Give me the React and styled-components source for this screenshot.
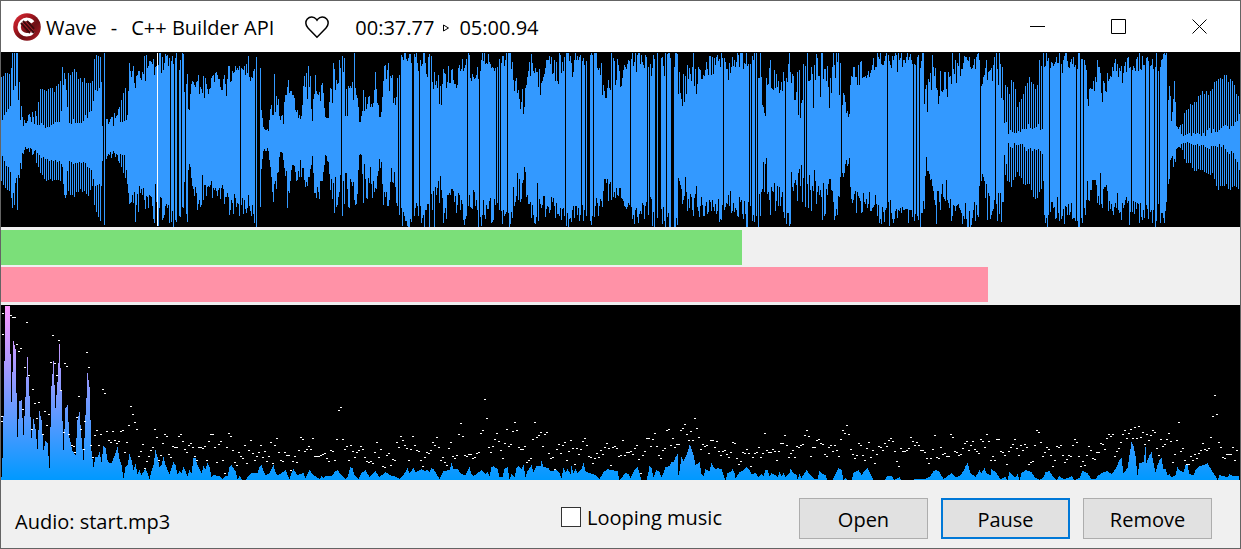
import React from "react";
import styled, { createGlobalStyle, css } from "styled-components";

const GlobalStyle = createGlobalStyle`
  *, *::before, *::after { box-sizing: border-box; }
  body { margin: 0; background: #f0f0f0; }
`;

const Window = styled.main`
  min-height: 100vh;
  display: flex;
  flex-direction: column;
  border: 1px solid #646464;
  background: #f0f0f0;
  color: #000;
  font: 20px/28px "Open Sans", "Noto Sans", sans-serif;
`;

const TitleBar = styled.header`
  display: flex;
  align-items: center;
  height: 51px;
  padding-left: 12px;
  background: #fff;
`;

const Title = styled.h1`
  display: flex;
  gap: 14px;
  margin: 0 31px 0 5px;
  padding-top: 2px;
  font: inherit;
  white-space: nowrap;
`;

const Times = styled.div`
  display: flex;
  align-items: center;
  gap: 8px;
  margin-left: 26px;
  padding-top: 2px;
`;

const Controls = styled.div`
  display: flex;
  align-self: stretch;
  margin-left: auto;
`;

const ControlButton = styled.button`
  display: flex;
  align-items: center;
  justify-content: center;
  width: 81px;
  padding: 0;
  border: 0;
  background: transparent;
`;

const Chart = styled.svg`
  display: block;
  width: 100%;
  height: 175px;
  background: #000;
`;

const Levels = styled.section`
  display: flex;
  flex-direction: column;
  gap: 2px;
  padding: 3px 0;
`;

const Level = styled.div`
  height: 35px;
  background: ${(p) => p.$color};
`;

const Footer = styled.footer`
  display: flex;
  align-items: flex-start;
  padding: 18px 28px 9px 14px;
`;

const FileName = styled.p`
  margin: 10px auto 0 0;
`;

const LoopLabel = styled.label`
  display: flex;
  align-items: center;
  gap: 6px;
  height: 40px;
  margin-right: 77px;
`;

const CheckBox = styled.input`
  appearance: none;
  width: 20px;
  height: 20px;
  margin: 0 0 2px;
  border: 1px solid #333;
  background: #fff;

  &:checked { background: #0078d7; }
`;

const Actions = styled.div`
  display: flex;
  gap: 13px;
`;

const ActionButton = styled.button`
  width: 129px;
  height: 41px;
  padding: 2px 0 0;
  border: 1px solid #adadad;
  background: #e1e1e1;
  color: #000;
  font: inherit;

  ${(p) => p.$primary && css`
    border: 2px solid #0078d7;
  `}
`;

/* Envelope points: x, upper outer, upper inner, lower inner, lower outer. */
const ENVELOPE = `
0 26 74 98 130|6 16 60 112 140|10 18 55 118 140|12 8 40 120 156|17 2 42 125 173|19 35 57 120 130|20 55 75 97 118|24 68 76 95 97|30 64 75 96 100|36 62 76 98 112|40 36 72 104 121|46 36 78 106 130|55 36 74 108 130|60 26 70 108 131|62 22 50 115 134|64 19 22 140 144|66 20 40 130 144|68 20 74 104 142|72 13 74 108 148|80 24 72 108 139|88 28 65 112 145|92 28 60 120 134|94 3 40 132 155|100 1 40 130 173|102 70 76 97 110|106 66 74 98 105|112 67 76 98 104|116 60 72 100 106|120 52 70 102 114|125 34 72 102 128|127 40 68 130 140|129 8 18 148 160|135 22 38 136 163|141 22 30 132 146|144 10 34 135 153|150 6 22 140 152|155 14 32 130 166|160 2 32 132 165|166 8 25 144 155|169 4 14 150 172|172 2 30 155 173|180 1 20 150 173|183 1 3 150 173|184 36 60 112 140|187 10 60 105 157|188 55 72 102 122|191 30 34 120 125|194 15 34 140 148|198 28 50 120 152|205 22 48 125 140|212 26 36 128 142|217 21 28 138 143|222 34 42 132 145|226 20 48 140 170|232 18 28 142 160|236 16 25 140 152|240 8 22 150 164|244 16 24 134 166|248 8 24 140 173|250 26 30 140 155|254 18 22 140 172|256 1 10 150 174|260 16 18 154 156|261 58 60 115 118|263 74 78 96 98|268 78 80 96 98|270 45 66 106 118|273 28 65 110 142|277 35 55 118 130|280 65 70 98 104|283 65 72 100 108|286 28 50 110 150|289 28 46 115 142|292 38 46 112 118|296 58 66 108 125|300 64 68 105 120|304 23 60 115 125|307 34 70 120 145|309 14 60 120 144|312 68 70 102 104|314 24 42 138 142|319 38 44 125 154|322 36 58 128 130|325 64 66 102 104|328 66 67 105 110|330 34 36 125 135|333 10 58 108 153|337 15 35 130 148|343 15 63 110 155|347 25 70 110 162|351 35 50 125 134|354 9 48 130 150|357 36 60 125 145|359 64 72 103 104|361 64 70 100 104|364 10 60 108 161|367 38 55 115 148|371 25 58 115 145|375 26 50 126 156|379 60 70 102 120|381 58 70 110 118|383 20 40 140 150|388 15 32 135 150|392 30 60 105 125|394 50 66 120 130|397 28 35 140 165|399 5 30 150 172|401 3 5 155 170|406 1 14 160 170|409 1 4 164 174|414 6 22 150 165|420 1 18 150 165|425 3 12 155 173|427 2 40 150 165|429 1 3 150 173|432 15 50 120 150|434 5 48 125 165|438 18 56 126 145|441 28 60 112 145|443 12 30 140 165|447 18 40 138 160|451 22 40 135 145|456 20 40 130 155|460 10 28 145 155|463 4 24 150 168|466 5 30 150 170|470 10 35 130 150|474 18 28 138 155|478 18 30 150 170|482 3 12 148 168|487 2 14 145 160|491 12 18 140 165|495 15 24 140 160|499 1 10 150 172|504 4 22 150 165|508 1 10 158 174|512 5 25 140 170|515 28 46 120 155|519 38 56 122 150|522 42 62 110 150|524 45 63 100 120|526 32 35 122 140|528 10 25 145 155|532 5 25 150 165|537 8 40 130 165|540 30 45 150 157|543 20 36 140 155|546 3 15 150 165|550 3 14 145 160|554 12 30 135 160|558 3 35 160 165|562 12 20 150 165|567 1 15 160 172|572 2 26 155 170|577 2 8 150 165|583 8 15 150 165|590 1 4 160 174|593 1 3 160 173|597 10 44 140 160|601 20 55 125 155|604 35 60 115 135|608 15 45 125 150|612 5 45 130 155|616 10 45 130 160|620 30 50 127 140|
622 20 28 145 155|626 10 22 150 165|630 6 18 150 160|635 2 20 155 170|640 2 22 150 165|645 1 15 150 170|650 8 30 145 165|654 5 10 150 172|662 2 30 155 172|670 1 8 155 172|675 3 28 150 170|677 1 2 170 172|678 28 60 120 155|682 28 58 118 145|685 30 56 112 135|687 18 40 138 155|691 12 35 138 150|693 3 35 145 160|697 20 46 130 160|700 20 28 145 160|705 15 25 142 160|709 8 24 140 155|715 10 24 138 155|720 2 20 150 168|725 4 12 155 170|729 8 35 135 160|733 4 22 150 155|738 1 18 145 170|743 1 20 142 172|748 3 15 150 170|753 1 10 155 173|757 1 50 140 172|760 2 20 140 165|763 45 70 100 130|766 35 70 105 138|768 28 45 130 150|771 8 40 132 160|774 22 38 130 155|778 22 40 135 150|782 20 45 132 150|785 12 30 140 165|789 10 45 130 165|793 20 60 110 155|797 28 62 105 140|800 28 70 105 135|803 10 75 108 145|807 5 40 130 150|811 6 60 115 150|814 8 65 112 145|818 18 50 125 145|822 4 40 130 160|826 20 40 135 155|829 22 58 122 140|832 10 35 135 145|834 1 30 140 173|838 2 32 140 172|840 20 55 115 150|844 38 60 115 120|846 60 63 108 115|849 60 66 104 108|850 30 35 134 138|853 18 30 135 158|857 20 40 135 155|861 15 40 132 155|865 24 28 145 155|869 16 26 140 160|873 5 18 140 160|877 3 20 145 165|881 2 20 152 168|886 2 14 150 165|890 2 20 145 170|895 2 12 155 172|899 3 30 155 165|903 8 20 155 160|908 2 18 155 168|912 8 14 150 172|918 1 20 150 174|923 2 50 130 170|926 30 70 105 150|929 32 40 120 125|932 10 40 130 135|935 5 45 130 165|939 25 55 115 155|942 25 42 130 140|946 25 45 118 145|949 25 45 145 165|952 5 28 150 165|955 3 40 148 160|960 4 24 148 165|965 8 20 150 170|970 8 18 152 170|975 10 20 150 165|978 2 14 140 170|981 15 40 115 140|984 28 48 125 145|988 3 40 130 165|992 3 30 138 155|996 1 25 150 172|1000 10 45 128 165|1003 28 50 130 155|1004 50 74 102 116|1006 14 74 110 133|1008 48 82 90 133|1011 24 82 95 135|1014 26 82 90 130|1017 52 82 90 120|1022 45 80 92 132|1026 28 80 94 138|1029 23 76 94 132|1033 30 80 95 148|1036 38 78 94 152|1039 6 78 94 144|1042 12 80 100 140|1044 8 18 150 165|1047 1 20 150 170|1049 2 30 150 165|1053 10 18 150 165|1057 1 12 142 160|1062 5 25 150 170|1067 1 15 152 165|1071 5 22 150 172|1075 10 15 150 172|1078 1 40 150 174|1082 1 10 155 172|1086 10 20 140 155|1087 40 62 110 140|1090 35 45 125 145|1094 30 40 125 135|1097 8 30 130 155|1100 28 55 120 155|1103 22 55 115 145|1107 25 40 138 155|1111 15 25 150 155|1115 5 18 150 165|1119 15 28 130 165|1123 20 32 150 160|1126 12 32 145 165|1129 8 25 150 168|1132 3 20 140 165|1136 10 22 150 165|1141 1 18 150 168|1146 3 15 150 172|1151 12 20 150 165|1155 1 18 155 172|1159 1 30 150 174|1163 1 2 160 174|1166 2 10 150 170|1168 45 50 125 135|1169 32 60 105 133|1171 65 72 95 104|1174 33 50 105 125|1176 72 76 96 97|1179 74 82 94 95|1182 70 84 90 98|1185 56 84 90 112|1190 52 84 90 112|1195 50 84 92 122|1199 40 84 92 120|1205 38 84 92 122|1209 38 80 94 126|1213 32 82 90 125|1218 20 83 90 142|1222 20 82 92 135|1226 20 79 96 135|1228 24 78 96 142|1233 30 76 100 134|1237 40 70 108 138|1240 46 58 120 138
`.trim().split("|").map((point) => point.trim().split(" ").map(Number));

/* Stretches where every second sample is a tall spike: from, to, parity of the tall ones. */
const COMBS = [[0, 12, 1], [36, 62, 0], [67, 101, 0], [119, 127, 1], [1004, 1043, 1], [1180, 1240, 0]];

const SILENT = new Set([
  103, 105, 170, 174, 177, 178, 181, 185, 240, 255, 257, 258, 259, 341, 398, 400, 412, 413, 419, 430,
  467, 479, 496, 498, 500, 507, 565, 581, 585, 587, 588, 589, 593, 612, 630, 647, 649,
  655, 656, 658, 659, 660, 666, 671, 672, 673, 723, 749, 751, 755, 757, 785, 804, 806,
  841, 887, 913, 916, 919, 980, 995, 1049, 1060, 1076, 1080, 1083, 1131, 1145, 1149,
  1154, 1157, 1159, 1167,
]);

const SPECTRUM = `1 172 2 153 3 111 4 56 5 1 9 1 10 49 11 97 12 67 13 36 14 40 15 44 16 88 17 132 18 114 19 96 21 95 22 113 23 130 24 111 25 92 26 72 27 52 28 72 29 91 30 112 31 133 33 114 35 124 37 144 39 106 41 115 43 145 45 136 47 138 48 151 49 163 50 122 51 81 52 69 53 56 54 80 55 103 57 77 58 58 59 39 60 63 61 86 62 116 63 145 64 124 65 103 67 100 69 133 72 146 75 150 77 115 79 107 81 133 83 155 85 110 86 93 87 68 88 75 89 82 90 115 91 146 93 162 95 152 97 152 99 147 101 157 103 141 105 143 107 155 109 158 111 158 115 148 117 142 119 154 121 160 123 173 125 162 127 160 129 149 131 155 133 165 135 159 137 169 139 165 141 170 145 163 147 168 149 174 151 166 153 160 155 145 157 152 159 162 161 160 163 152 165 160 169 169 171 163 173 157 175 160 177 169 179 166 181 168 183 162 185 166 187 171 189 165 191 168 193 153 195 153 197 160 201 168 203 161 205 164 207 158 209 162 211 172 213 170 219 171 222 174 225 171 227 171 229 162 231 160 235 166 237 174 239 171 242 175 245 175 247 172 251 168 257 168 259 162 261 160 263 166 265 170 269 168 271 164 273 160 275 167 277 170 281 168 285 165 289 174 291 168 293 164 297 170 303 168 305 173 309 165 313 170 319 174 321 171 323 173 325 171 331 171 335 166 337 165 341 170 345 174 347 172 350 162 352 163 354 170 358 174 361 168 365 165 369 172 375 166 379 172 385 167 391 171 394 171 399 174 403 170 407 163 409 168 413 163 415 167 421 164 424 166 427 165 429 167 431 163 433 164 439 174 443 166 449 165 451 158 453 164 457 164 461 169 465 170 469 162 471 169 473 171 477 168 481 165 485 169 487 167 489 171 491 162 493 161 497 164 499 172 502 172 504 164 507 162 509 174 511 169 514 172 516 163 518 161 521 164 523 160 525 172 527 166 531 160 533 167 536 161 540 161 541 156 543 162 548 163 550 166 556 165 559 168 561 173 563 163 565 167 567 164 570 169 571 161 573 168 575 164 577 168 581 164 583 158 585 166 589 168 595 170 599 174 603 167 607 164 610 165 617 166 619 175 625 168 628 169 630 173 634 165 637 162 639 168 641 175 646 175 648 167 649 161 651 163 653 172 656 165 659 167 661 172 663 168 665 162 669 161 671 157 673 157 675 152 677 149 678 170 679 166 681 152 683 156 685 152 687 147 689 140 690 141 693 150 695 160 699 157 701 169 703 171 705 164 709 166 711 158 713 162 715 164 717 163 721 164 723 170 725 175 727 168 730 167 732 164 734 168 735 173 739 167 743 165 746 162 749 165 751 169 755 168 758 172 761 169 763 171 765 165 767 165 769 171 771 168 775 170 777 172 779 167 781 171 783 168 785 172 789 168 790 164 793 168 796 170 797 174 799 169 801 173 804 168 806 165 810 170 814 174 817 174 819 166 821 168 825 170 827 175 832 175 835 169 838 163 841 165 843 175 845 173 847 175 851 175 853 168 858 165 861 170 864 166 867 163 869 167 873 175 884 175 887 171 891 171 894 175 899 172 901 175 925 174 930 171 933 166 936 165 939 167 943 174 947 171 951 168 955 172 959 171 963 166 965 161 967 158 970 168 975 172 979 165 981 168 984 163 986 168 990 170 991 164 995 167 1000 174 1005 172 1007 175 1009 167 1013 171 1015 172 1017 169 1019 175 1021 168 1025 165 1031 167 1034 172 1039 175 1043 172 1045 167 1049 166 1053 172 1056 175 1059 171 1063 174 1067 173 1071 171 1074 175 1079 173 1082 166 1087 168 1091 174 1095 174 1097 171 1101 168 1107 166 1111 169 1115 164 1119 155 1121 153 1123 168 1127 163 1129 150 1131 137 1133 141 1135 151 1137 170 1139 158 1143 157 1145 142 1146 158 1149 150 1151 147 1153 158 1155 167 1157 160 1159 155 1161 153 1163 164 1165 164 1167 170 1169 169 1171 172 1175 170 1177 162 1179 165 1183 167 1185 160 1187 160 1189 169 1193 170 1195 165 1199 161 1203 160 1207 158 1211 165 1215 171 1217 175 1219 170 1223 171 1227 172 1229 169 1233 171 1238 171`
  .split(" ").map(Number).reduce((points, n, i, all) => (i % 2 ? [...points, [all[i - 1], n]] : points), []);

const EARLY_PEAKS = [
  [2, 8], [2, 29], [1, 111], [1, 116], [10, 10], [12, 12], [14, 12], [16, 39], [18, 46], [20, 43], [22, 104],
  [24, 62], [26, 17], [28, 70], [31, 124], [32, 84], [34, 98], [36, 113], [38, 97], [42, 129], [44, 106],
  [46, 120], [48, 109], [50, 57], [52, 30], [54, 58], [56, 70], [58, 35], [60, 85], [63, 127], [64, 58],
  [66, 61], [68, 129], [71, 140], [73, 141], [74, 147], [76, 112], [78, 91], [80, 124], [83, 144], [84, 116],
  [86, 47], [88, 62], [90, 140],
];

/* Held peak of each band, two pixels a band, from x = 92 on. */
const PEAKS = `152 130 125 140 129 84 88 126 135 137 126 135 138 136 126 125 147 137 120 101 109 117 124 151 146 139 163 156 151 145 142 124 132 155 150 138 129 131 149 152 141 142 142 131 129 136 144 147 140 138 142 151 155 142 142 143 141 155 136 129 129 142 157 139 136 155 168 142 128 131 145 157 160 147 151 153 140 158 145 135 148 155 151 147 140 152 146 156 151 137 158 140 133 147 155 156 147 150 150 165 156 151 157 145 132 134 146 144 141 144 133 151 151 151 150 149 148 153 156 145 146 155 134 105 102 134 144 141 155 140 146 152 147 145 141 144 152 156 157 156 158 147 137 152 144 161 162 150 148 160 154 155 137 142 131 135 140 143 155 144 131 140 145 146 155 161 152 147 148 145 137 140 132 142 155 152 157 160 143 137 151 153 150 129 118 131 150 151 149 149 153 152 148 147 128 125 94 113 142 147 141 134 128 136 145 153 138 124 141 139 126 117 125 142 144 144 141 157 155 153 134 117 132 130 127 141 129 127 148 153 152 164 144 139 148 140 137 155 146 135 143 159 143 149 144 136 133 140 151 152 158 153 148 152 145 149 142 138 143 160 142 141 143 151 150 135 150 147 147 146 149 143 140 154 168 150 146 133 133 141 134 128 141 150 153 145 143 125 124 140 133 142 139 139 125 123 119 129 135 126 135 113 123 132 144 139 141 140 148 135 135 142 136 146 150 146 145 149 152 147 137 138 153 159 156 147 148 144 148 161 152 148 147 142 152 148 128 145 147 147 144 146 155 146 138 138 130 140 152 148 145 152 141 142 140 139 130 125 131 151 142 142 135 134 138 139 149 151 142 140 146 140 145 151 134 125 128 120 129 144 149 153 150 138 140 150 155 143 137 152 145 158 149 141 142 145 138 141 135 133 136 146 156 161 143 146 146 145 143 132 136 140 137 140 145 145 147 153 158 153 144 130 152 153 142 149 148 151 151 129 132 146 147 150 149 143 138 136 145 140 136 144 146 148 134 136 142 129 136 155 151 155 134 134 146 147 150 159 146 142 139 134 143 150 140 145 139 142 159 157 156 140 125 127 137 151 147 142 144 150 161 155 141 142 140 150 157 154 150 151 140 134 137 151 161 156 160 150 141 145 153 154 147 147 138 139 144 133 129 131 129 151 146 143 137 129 125 133 128 124 133 122 133 121 132 127 139 129 135 130 125 127 143 150 134 141 139 134 128 136 157 149 135 117 146 143 155 159 159 151 155 149 153 148 145 138 144 145 143 132 111 90 109 137 142 152 153 149 149 149 142 155 145`
  .split(" ").map(Number);

const noise = (n) => {
  const v = Math.sin(n * 127.1 + 311.7) * 43758.5453;
  return v - Math.floor(v);
};

function sample(points, x) {
  let i = 0;
  while (i < points.length - 2 && points[i + 1][0] <= x) i += 1;
  const [a, b] = [points[i], points[i + 1]];
  const t = Math.min(1, Math.max(0, (x - a[0]) / (b[0] - a[0])));
  return a.slice(1).map((v, k) => v + (b[k + 1] - v) * t);
}

/* Share of the way from the outer to the inner envelope; a few samples overshoot the outer one. */
function depth(seed) {
  const n = noise(seed);
  return n < 0.22 ? -0.25 : (n - 0.22) * 1.3;
}

function wavePath() {
  let d = "";
  for (let x = 1; x < 1240; x += 1) {
    if (SILENT.has(x)) continue;
    const [outTop, inTop, inLow, outLow] = sample(ENVELOPE, x);
    const comb = COMBS.find(([from, to]) => x >= from && x < to);
    const base = comb && (x % 2 === comb[2] ? 0 : 0.88);
    const up = comb ? base + noise(x) * 0.12 : depth(x);
    const down = comb ? base + noise(x + 5000) * 0.12 : depth(x + 5000);
    const top = Math.max(1, Math.round(outTop + (inTop - outTop) * up));
    const low = Math.min(175, Math.round(outLow + (inLow - outLow) * down));
    d += `M${x - 1} ${top}h1V${low}h-1z`;
  }
  return `${d}M103 1h1V173h-1z`;
}

function spectrumPath() {
  let d = "M0 175";
  for (let x = 1; x < 1239; x += 1) d += `V${Math.round(sample(SPECTRUM, x)[0])}h1`;
  return `${d}V175z`;
}

function peaksPath() {
  const all = [...EARLY_PEAKS, ...PEAKS.map((y, i) => [92 + i * 2, y])];
  return all.map(([x, y]) => `M${x - 1} ${y}h2v1h-2z`).join("");
}

const WAVE = wavePath();
const BANDS = spectrumPath();
const HELD = peaksPath();

function Waveform() {
  return (
    <Chart viewBox="0 0 1239 175" preserveAspectRatio="none" shapeRendering="crispEdges" role="img" aria-label="Waveform">
      <path d={WAVE} fill="#3399ff" />
      <rect x="156" y="1" width="1" height="173" fill="#fff" />
    </Chart>
  );
}

function Spectrum() {
  return (
    <Chart viewBox="0 0 1239 175" preserveAspectRatio="none" shapeRendering="crispEdges" role="img" aria-label="Spectrum">
      <defs>
        <linearGradient id="bands" gradientUnits="userSpaceOnUse" x1="0" y1="0" x2="0" y2="175">
          <stop offset="0" stopColor="#ff99ff" />
          <stop offset="1" stopColor="#0099ff" />
        </linearGradient>
      </defs>
      <path d={BANDS} fill="url(#bands)" />
      <path d={HELD} fill="#fff" />
    </Chart>
  );
}

function Logo() {
  return (
    <svg width="28" height="28" viewBox="0 0 28 28" aria-hidden="true">
      <defs>
        <linearGradient id="disc" x1="0" y1="0" x2="1" y2="1">
          <stop offset="0" stopColor="#e0303c" />
          <stop offset="0.35" stopColor="#a8161f" />
          <stop offset="0.6" stopColor="#6c1015" />
          <stop offset="1" stopColor="#b31b26" />
        </linearGradient>
      </defs>
      <circle cx="14" cy="14" r="13.8" fill="url(#disc)" />
      <path d="M21.3 8.2A9.4 9.4 0 1 0 21.6 19.4L18.6 17.4A5.9 5.9 0 1 1 18.4 10.4Z" fill="#fff" />
      <path d="M8 10l9 10M10 8l11 12M14 8l7 8" stroke="#3d0a0d" strokeWidth="2" />
      <path d="M9.5 9.5l9 10M12.5 8.5l8 9" stroke="#a8222b" strokeWidth="1" />
    </svg>
  );
}

function Heart() {
  return (
    <svg width="24" height="24" viewBox="0 0 24 24" fill="none" stroke="#000" strokeWidth="1.5" aria-hidden="true">
      <path d="M12 22.2L3 13C0.4 10.3 0.2 6.3 2.3 3.9C4.8 1.1 9 1.3 11.2 4.1L12 5.2L12.8 4.1C15 1.3 19.2 1.1 21.7 3.9C23.8 6.3 23.6 10.3 21 13Z" />
    </svg>
  );
}

function ControlIcon({ d }) {
  return (
    <svg width="15" height="17" viewBox="0 0 15 17" fill="none" stroke="#000" aria-hidden="true">
      <path d={d} />
    </svg>
  );
}

const CONTROLS = [
  ["Minimize", "M0 8.5h15"],
  ["Maximize", "M0.5 1.5h14v14h-14z"],
  ["Close", "M0.5 1.5l14 14M14.5 1.5l-14 14"],
];

const LEVELS = [
  { name: "Left channel", value: 59.8, color: "#7bdf79" },
  { name: "Right channel", value: 79.7, color: "#ff92a7" },
];

export default function App() {
  return (
    <Window>
      <GlobalStyle />
      <TitleBar>
        <Logo />
        <Title>
          <span>Wave</span>
          <span>-</span>
          <span>C++ Builder API</span>
        </Title>
        <Heart />
        <Times>
          <span>00:37.77</span>
          <svg width="9" height="10" viewBox="0 0 9 10" fill="none" stroke="#000" aria-hidden="true">
            <path d="M1.5 2L6.5 5L1.5 8Z" />
          </svg>
          <span>05:00.94</span>
        </Times>
        <Controls>
          {CONTROLS.map(([name, d]) => (
            <ControlButton key={name} type="button" aria-label={name}>
              <ControlIcon d={d} />
            </ControlButton>
          ))}
        </Controls>
      </TitleBar>
      <Waveform />
      <Levels>
        {LEVELS.map(({ name, value, color }) => (
          <Level
            key={name}
            role="meter"
            aria-label={name}
            aria-valuenow={value}
            $color={color}
            style={{ width: `${value}%` }}
          />
        ))}
      </Levels>
      <Spectrum />
      <Footer>
        <FileName>Audio: start.mp3</FileName>
        <LoopLabel htmlFor="loop">
          <CheckBox id="loop" type="checkbox" />
          Looping music
        </LoopLabel>
        <Actions>
          <ActionButton type="button">Open</ActionButton>
          <ActionButton type="button" $primary>Pause</ActionButton>
          <ActionButton type="button">Remove</ActionButton>
        </Actions>
      </Footer>
    </Window>
  );
}
